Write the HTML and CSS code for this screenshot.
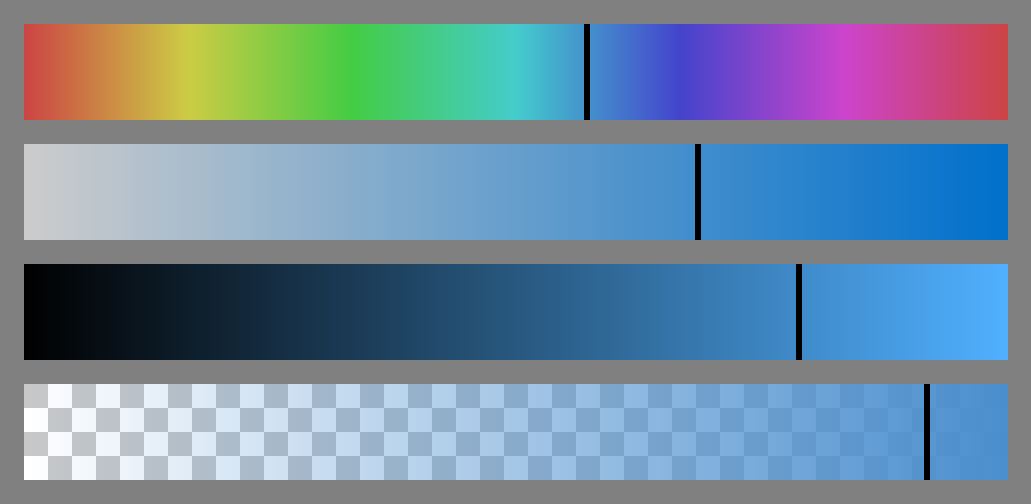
FILE: index.html
```html
<!DOCTYPE html>
<html>
<head>
<meta charset="utf-8">
<link rel="stylesheet" href="styles.css">
</head>
<body>
<div class="stack">
  <div class="bar hue"><span class="marker" style="left:560px"></span></div>
  <div class="bar gray-blue"><span class="marker" style="left:671px"></span></div>
  <div class="bar black-blue"><span class="marker" style="left:772px"></span></div>
  <div class="bar alpha"><div class="alpha-fill"></div><span class="marker" style="left:900px"></span></div>
</div>
</body>
</html>
```

FILE: styles.css
```css
html, body {
  margin: 0;
  padding: 0;
  background: #808080;
}
.stack {
  display: flex;
  flex-direction: column;
  gap: 24px;
  padding: 24px;
  width: 984px;
}
.bar {
  position: relative;
  height: 96px;
  width: 984px;
}
.hue {
  background: linear-gradient(to right,
    #cc4444 0%, #cccc44 16.667%, #44cc44 33.333%, #44cccc 50%,
    #4444cc 66.667%, #cc44cc 83.333%, #cc4444 100%);
}
.gray-blue {
  background: linear-gradient(to right, #cccccc, #0070cc);
}
.black-blue {
  background: linear-gradient(to right, #000000, #50b0ff);
}
.alpha {
  background: conic-gradient(#ffffff 25%, #c8c8c8 0 50%, #ffffff 0 75%, #c8c8c8 0);
  background-size: 48px 48px;
}
.alpha-fill {
  position: absolute;
  inset: 0;
  background: linear-gradient(to right, rgba(74, 142, 206, 0), rgba(74, 142, 206, 1));
}
.marker {
  position: absolute;
  top: 0;
  width: 6px;
  height: 96px;
  background: #000000;
}
```
